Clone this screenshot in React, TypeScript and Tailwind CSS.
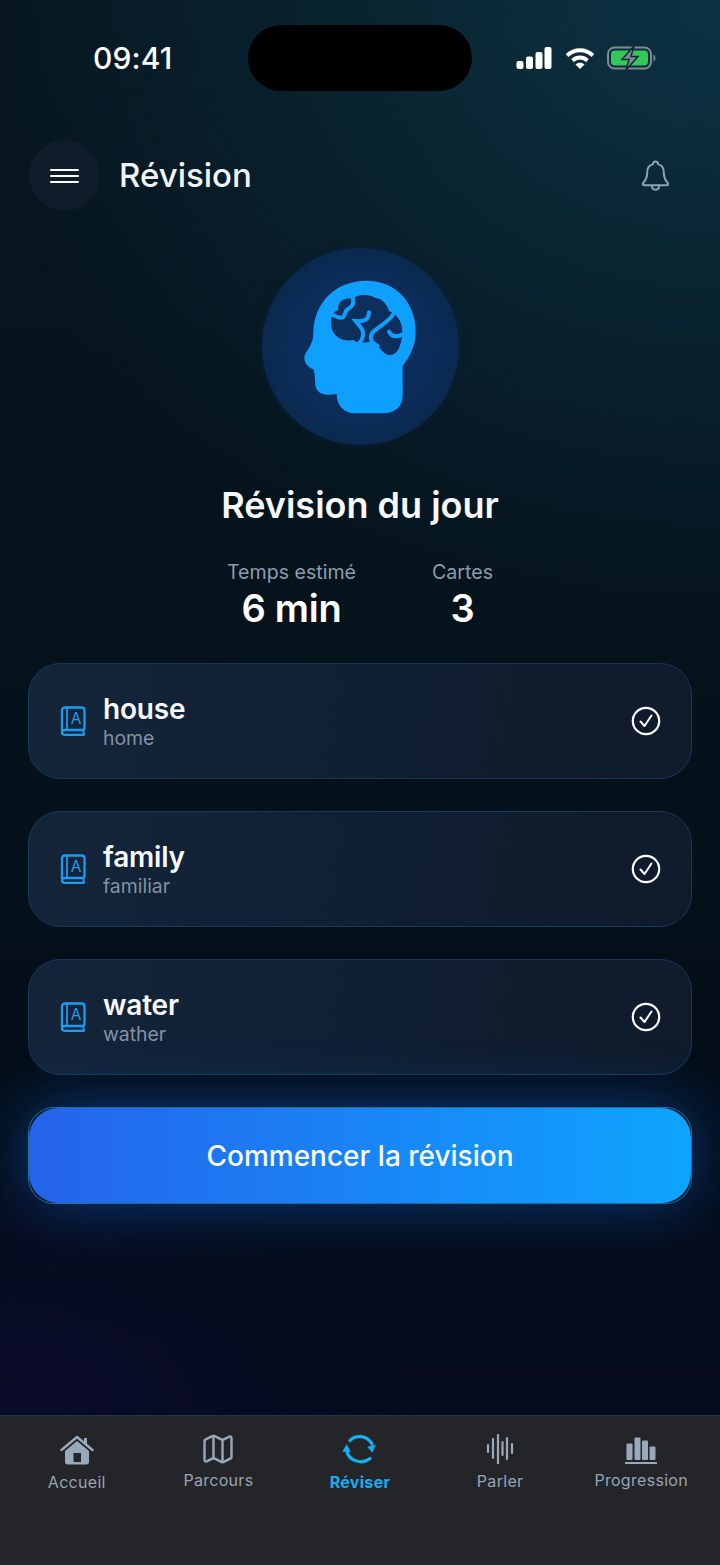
import { Map as MapIcon } from "lucide-react";

const cards = [
  { word: "house", hint: "home" },
  { word: "family", hint: "familiar" },
  { word: "water", hint: "wather" },
];

function SignalIcon() {
  return (
    <svg width="36" height="22" viewBox="0 0 36 22" fill="white">
      <rect x="0.5" y="14" width="7" height="8" rx="2" />
      <rect x="10" y="9.5" width="7" height="12.5" rx="2" />
      <rect x="19.5" y="5" width="7" height="17" rx="2" />
      <rect x="28.5" y="0" width="7" height="22" rx="2" />
    </svg>
  );
}

function WifiIcon() {
  return (
    <svg width="30" height="23" viewBox="0 0 30 22" fill="none" stroke="white" strokeWidth="3.8">
      <path d="M2 8 C9.5 1 20.5 1 28 8" />
      <path d="M7.5 13 C12 9 18 9 22.5 13" />
      <path d="M15 21.5 L10.5 17 C13 14.6 17 14.6 19.5 17 Z" fill="white" stroke="none" />
    </svg>
  );
}

function BatteryIcon() {
  return (
    <svg width="50" height="24" viewBox="0 0 50 24" fill="none">
      <rect x="1" y="1.5" width="43" height="21" rx="6.5" stroke="#7d8b93" strokeWidth="2" />
      <rect x="4" y="4.5" width="37" height="15" rx="4" fill="#34c759" />
      <path d="M46.5 8.5 C49 9.5 49 14.5 46.5 15.5 Z" fill="#7d8b93" />
      <path d="M27 0 L15 13.5 H22 L19 24 L31 10.5 H24 Z" fill="#7d8b93" stroke="#0b2836" strokeWidth="1.5" />
    </svg>
  );
}

function BellIcon() {
  return (
    <svg width="27" height="31" viewBox="0 0 26 30" fill="none" stroke="#8fa4b2" strokeWidth="1.9" strokeLinejoin="round">
      <path d="M13 1.5 C14.5 1.5 15.5 2.5 15.5 4 C19.5 5 21 8.5 21 12 C21 17 22 19 25 22.5 C25.5 23.5 25 24.5 24 24.5 H2 C1 24.5 0.5 23.5 1 22.5 C4 19 5 17 5 12 C5 8.5 6.5 5 10.5 4 C10.5 2.5 11.5 1.5 13 1.5 Z" />
      <path d="M9.5 25 C9.5 30 16.5 30 16.5 25" />
    </svg>
  );
}

function HeadBrainIcon() {
  return (
    <svg width="114" height="134" viewBox="160 120 340 402">
      <path
        d="M350 122 C435 122 497 185 497 275 C497 320 478 350 458 378 L458 465 C458 500 435 520 400 520 L315 520 C280 520 260 495 260 462 C240 466 212 468 200 448 C192 432 198 410 190 388 C178 384 163 372 163 352 C165 335 190 315 190 282 C190 185 260 122 350 122 Z"
        fill="#0fa0ff"
      />
      <g transform="translate(225 135)">
        <path
          d="M18 105 C18 90 28 78 40 75 C35 55 55 35 82 42 C95 28 130 25 150 38 C170 40 185 55 192 78 C215 85 232 110 232 140 C232 170 222 200 205 208 C190 215 175 205 165 190 C155 180 148 172 135 170 C115 175 95 175 85 165 C60 170 35 160 24 140 C19 130 18 115 18 105 Z"
          fill="#0d2f5e"
        />
        <g fill="none" stroke="#0fa0ff" strokeWidth="12" strokeLinecap="round">
          <path d="M82 36 C92 60 75 68 65 75 C58 85 60 100 45 98 C35 97 28 92 16 86" />
          <path d="M132 82 C132 105 118 110 92 108 C105 125 120 135 112 160 C110 168 105 172 100 177" />
          <path d="M208 82 C195 110 160 125 145 140 C132 155 135 170 158 184" />
          <path d="M234 148 C215 158 200 155 192 140" />
        </g>
      </g>
    </svg>
  );
}

function BookIcon() {
  return (
    <svg width="26" height="31" viewBox="0 0 26 31" fill="none" stroke="#1b9cf0" strokeWidth="2.3" strokeLinejoin="round">
      <path d="M2 25 V4.5 C2 2.5 3 1.5 5 1.5 H21.5 C23.5 1.5 24.5 2.5 24.5 4.5 V21.5 C24.5 23 23.5 24 22 24 H5 C3 24 2 25.2 2 26.2 C2 27.8 3 28.8 5 28.8 H24.5" />
      <path d="M7 2 V23.5" strokeWidth="1.8" />
      <path d="M24 24 C23.2 25.5 23.2 27.3 24.5 28.8" strokeWidth="1.8" />
      <text x="16" y="17.5" textAnchor="middle" fontSize="15.5" fontFamily="Inter, sans-serif" fill="#1b9cf0" stroke="none">
        A
      </text>
    </svg>
  );
}

function CheckIcon() {
  return (
    <svg width="30" height="30" viewBox="0 0 30 30" fill="none" stroke="white">
      <circle cx="15" cy="15" r="13.2" strokeWidth="2.2" />
      <path d="M9.5 15.5 L13.5 20 L20.5 9.5" strokeWidth="2" strokeLinecap="round" strokeLinejoin="round" />
    </svg>
  );
}

function HomeIcon() {
  return (
    <svg width="34" height="30" viewBox="0 0 34 30" fill="#9aa8bb">
      <path d="M24 3 H27 V9 L24 7 Z" />
      <path d="M1.5 15 L17 2 L32.5 15" fill="none" stroke="#9aa8bb" strokeWidth="2.4" strokeLinecap="round" strokeLinejoin="round" />
      <path fillRule="evenodd" d="M5 16 L17 6 L29 16 V27 C29 28.5 28 29.5 26.5 29.5 H7.5 C6 29.5 5 28.5 5 27 Z M13.5 18 V27 H21 V18 Z" />
    </svg>
  );
}

function RefreshIcon() {
  return (
    <svg width="36" height="31" viewBox="0 0 36 31" fill="none" stroke="#16aef0" strokeWidth="3.2" strokeLinecap="round">
      <path d="M8 6.5 C13 1 25 0.5 30 10" />
      <path d="M5 18 C7.5 27 20 31 28 24.5" />
      <path d="M0.3 17.7 L4.7 10.3 L8.7 17.7 Z" fill="#16aef0" stroke="none" />
      <path d="M25.3 12.7 L33.8 10.7 L30.3 18.8 Z" fill="#16aef0" stroke="none" />
    </svg>
  );
}

function WaveIcon() {
  return (
    <svg width="28" height="30" viewBox="0 0 28 30" fill="none" stroke="#9aa8bb" strokeWidth="2.2" strokeLinecap="round">
      <path d="M2 11 V18" />
      <path d="M7 5 V24" />
      <path d="M12 1 V29" />
      <path d="M16.5 8 V21" />
      <path d="M21 4 V25" />
      <path d="M26 10 V19" />
    </svg>
  );
}

function BarsIcon() {
  return (
    <svg width="32" height="27" viewBox="0 0 32 27" fill="#9aa8bb">
      <rect x="1.5" y="6.5" width="6" height="16.5" rx="1" />
      <rect x="9.5" y="0.5" width="6" height="22.5" rx="1" />
      <rect x="17" y="3.5" width="6" height="19.5" rx="1" />
      <rect x="24.5" y="9.5" width="6" height="13.5" rx="1" />
      <rect x="0" y="25" width="32" height="2" />
    </svg>
  );
}

export default function App() {
  return (
    <div className="h-[1565px] w-[720px] overflow-hidden flex flex-col font-['Inter',sans-serif] text-white bg-[#04101a]">
      <div className="flex-1 flex flex-col bg-[radial-gradient(ellipse_760px_620px_at_100%_0%,#0c3243_0%,#0b2a38_30%,#08202c_60%,transparent_100%),radial-gradient(ellipse_420px_260px_at_0%_100%,#0b0c2a_0%,transparent_100%),linear-gradient(180deg,#08161f_0%,#05131d_45%,#040f19_70%,#050b1c_100%)]">
        <div className="flex items-center h-[66px] mt-[25px]">
          <div className="w-[248px] pl-[93px] text-[30px] font-medium leading-none tracking-[0.1px]">09:41</div>
          <div className="w-[224px] h-[66px] rounded-[33px] bg-black"></div>
          <div className="flex items-center pl-[44px]">
            <SignalIcon />
            <div className="ml-[13px]">
              <WifiIcon />
            </div>
            <div className="ml-[12px]">
              <BatteryIcon />
            </div>
          </div>
        </div>

        <div className="flex items-center mt-[49px] pl-[29px] pr-[51px] h-[71px]">
          <div className="w-[71px] h-[71px] rounded-full bg-[#111c2a] flex flex-col items-center justify-center gap-[4px]">
            <div className="w-[29px] h-[2px] bg-white rounded-full"></div>
            <div className="w-[29px] h-[2px] bg-white rounded-full"></div>
            <div className="w-[29px] h-[2px] bg-white rounded-full"></div>
          </div>
          <div className="ml-[19px] text-[33px] font-medium text-[#f1f5f9] flex-1">Révision</div>
          <BellIcon />
        </div>

        <div className="self-center mt-[37px] w-[197px] h-[197px] rounded-full bg-[radial-gradient(circle,#0e3264_0%,#0c2d5a_50%,#0a2440_100%)] shadow-[0_0_6px_rgba(10,36,64,0.7)] flex items-center justify-center">
          <HeadBrainIcon />
        </div>

        <h1 className="mt-[36px] text-center text-[36px] leading-[48px] font-semibold text-[#f6f8fb]">Révision du jour</h1>

        <div className="mt-[29px] flex justify-center gap-[76px]">
          <div className="flex flex-col items-center">
            <span className="text-[19.6px] leading-[28px] text-[#8d9bab]">Temps estimé</span>
            <span className="text-[38px] leading-[45px] font-semibold tracking-[-0.3px]">6 min</span>
          </div>
          <div className="flex flex-col items-center">
            <span className="text-[19.6px] leading-[28px] text-[#8d9bab]">Cartes</span>
            <span className="text-[38px] leading-[45px] font-semibold">3</span>
          </div>
        </div>

        <div className="mt-[32px] mx-[28px] flex flex-col gap-[32px]">
          {cards.map((card) => (
            <div
              key={card.word}
              className="h-[116px] rounded-[32px] border border-[#17385a] bg-[linear-gradient(100deg,#14253a_0%,#111f33_50%,#0f1b2b_100%)] flex items-center pl-[31px] pr-[30px]"
            >
              <BookIcon />
              <div className="ml-[17px] flex-1 flex flex-col">
                <span className="text-[28px] leading-[34px] font-semibold tracking-[-0.2px] text-[#f6f8fb]">{card.word}</span>
                <span className="text-[19.4px] leading-[24px] text-[#8391a3]">{card.hint}</span>
              </div>
              <CheckIcon />
            </div>
          ))}
        </div>

        <div className="mt-[32px] mx-[28px] h-[97px] rounded-[26px] border border-[#1d6d9e] bg-[#0b1f33] shadow-[0_0_60px_rgba(20,120,255,0.42)]">
          <div className="h-full rounded-[30px] bg-[linear-gradient(90deg,#2563eb_0%,#0ea5ff_100%)] flex items-center justify-center text-[28px] font-medium text-[#f8fbff]">
            Commencer la révision
          </div>
        </div>
      </div>

      <nav className="h-[150px] shrink-0 bg-[#232529] border-t border-[#1e3448] grid grid-cols-5 px-[6px] text-[#98a4b5]">
        <div className="flex flex-col items-center pt-[19px]">
          <HomeIcon />
          <span className="mt-[6px] text-[16px] leading-[22px] tracking-[0.3px]">Accueil</span>
        </div>
        <div className="flex flex-col items-center pt-[15px]">
          <MapIcon size={36} strokeWidth={1.6} color="#9aa8bb" />
          <span className="mt-[2px] text-[16px] leading-[22px] tracking-[0.3px]">Parcours</span>
        </div>
        <div className="flex flex-col items-center pt-[18px]">
          <RefreshIcon />
          <span className="mt-[6px] text-[16px] leading-[22px] font-bold tracking-[0.3px] text-[#16aef0]">Réviser</span>
        </div>
        <div className="flex flex-col items-center pt-[18px] pr-[3px]">
          <WaveIcon />
          <span className="mt-[6px] text-[16px] leading-[22px] tracking-[0.3px]">Parler</span>
        </div>
        <div className="flex flex-col items-center pt-[21px] pr-[4px]">
          <BarsIcon />
          <span className="mt-[5px] text-[16px] leading-[22px] tracking-[0.3px]">Progression</span>
        </div>
      </nav>
    </div>
  );
}
